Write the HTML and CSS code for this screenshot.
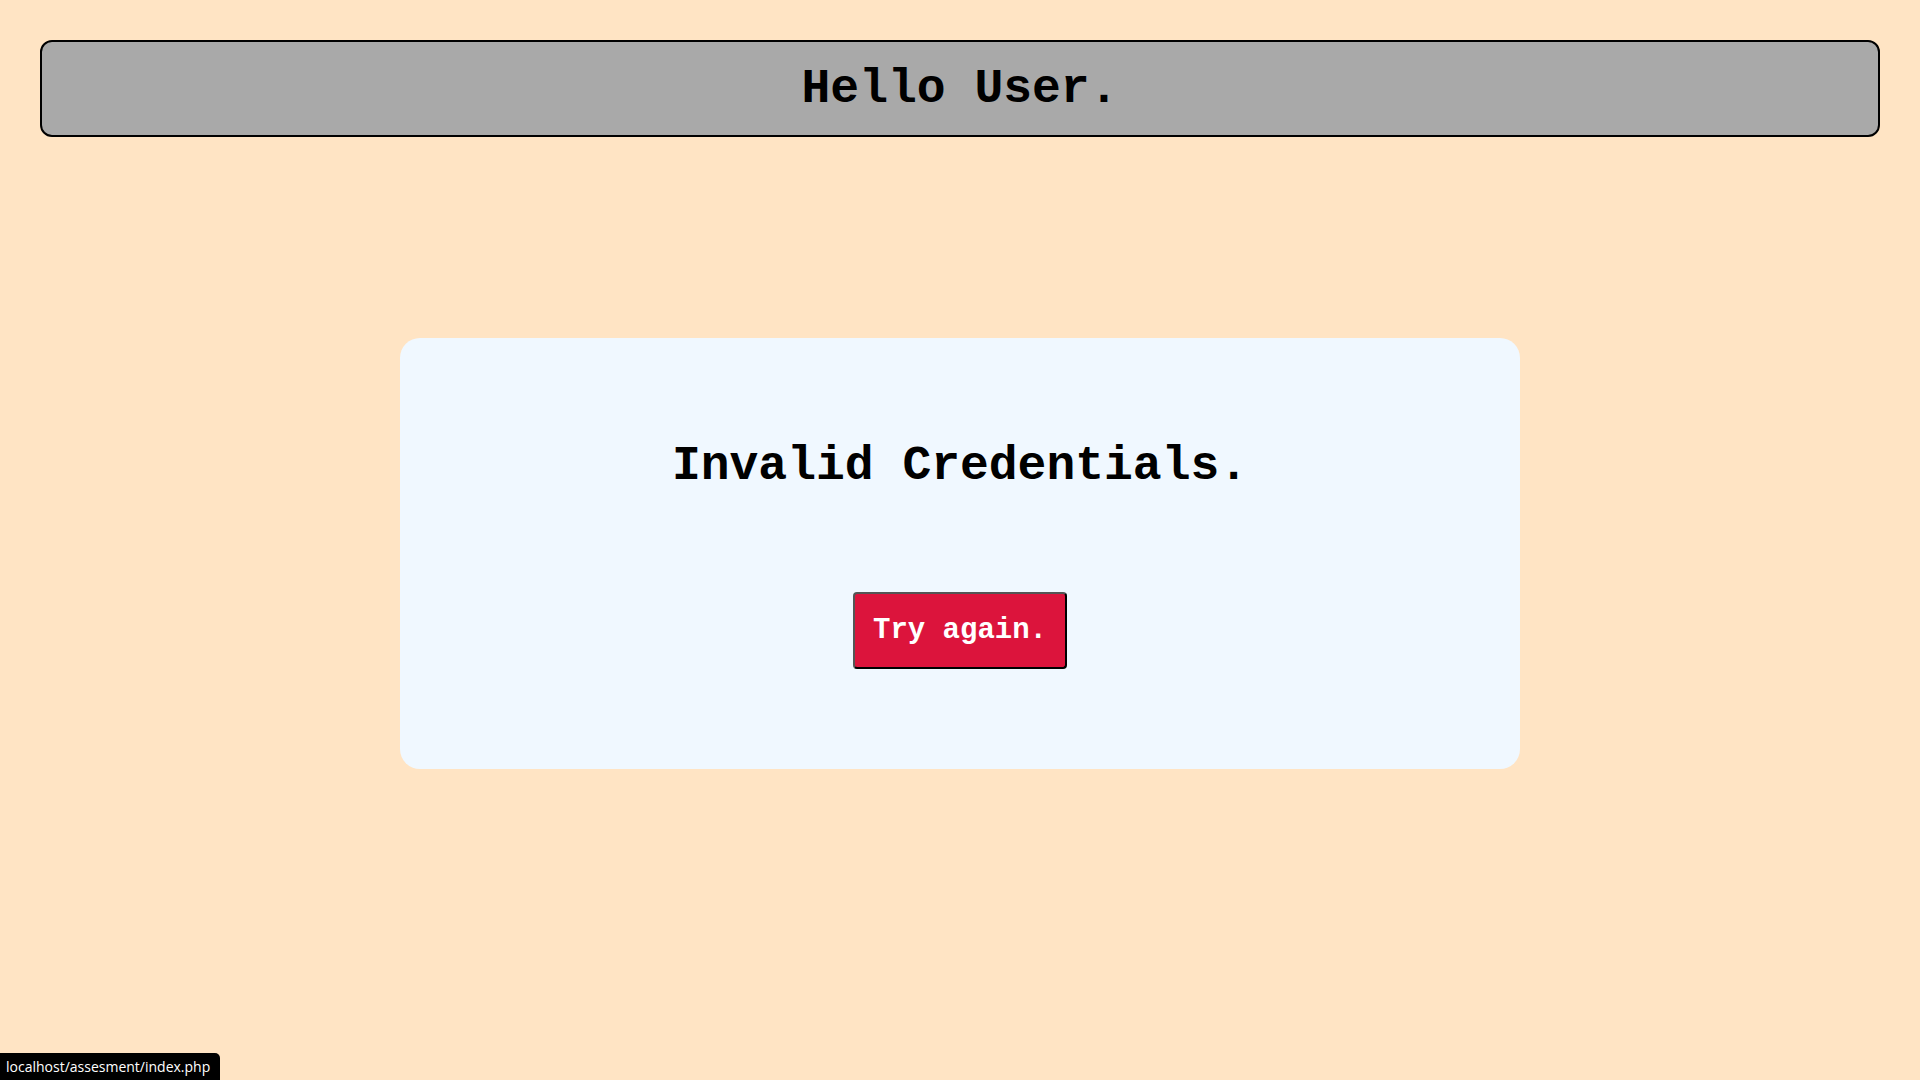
FILE: index.html
```html
<!DOCTYPE html>
<html lang="en">
<head>
<meta charset="utf-8">
<title>Invalid Credentials</title>
<link rel="stylesheet" href="styles.css">
</head>
<body>
<div class="page">
  <header class="topbar">
    <h1 class="greeting">Hello User.</h1>
  </header>
  <main class="content">
    <section class="card">
      <h2 class="message">Invalid Credentials.</h2>
      <a class="retry" href="#">Try again.</a>
    </section>
  </main>
</div>
<div class="status">localhost/assesment/index.php</div>
</body>
</html>
```
FILE: styles.css
```css
html, body {
  margin: 0;
  padding: 0;
}
body {
  background: #ffe4c4;
  font-family: "Courier New", "Liberation Mono", monospace;
  color: #000;
  min-height: 1080px;
}
.page {
  padding: 40px;
  display: flex;
  flex-direction: column;
}
.topbar {
  background: #a9a9a9;
  border: 2px solid #000;
  border-radius: 12px;
  padding: 20px 0 19px;
  text-align: center;
}
.greeting {
  margin: 0;
  font-size: 48px;
  line-height: 54px;
  font-weight: bold;
}
.content {
  display: flex;
  justify-content: center;
  padding-top: 201px;
}
.card {
  width: 1120px;
  box-sizing: border-box;
  background: #f0f8ff;
  border-radius: 20px;
  padding: 101px 0 100px;
  display: flex;
  flex-direction: column;
  align-items: center;
}
.message {
  margin: 0 0 99px;
  font-size: 48px;
  line-height: 54px;
  font-weight: bold;
}
.retry {
  display: block;
  background: #dc143c;
  color: #fff;
  text-decoration: none;
  font-size: 29px;
  line-height: 33px;
  font-weight: bold;
  padding: 20px 18px;
  border: 2px solid;
  border-color: #555 #000 #000 #555;
  border-radius: 4px;
}
.status {
  position: fixed;
  left: 0;
  bottom: 0;
  width: 220px;
  height: 27px;
  box-sizing: border-box;
  background: #000;
  color: #fff;
  font-family: "Open Sans", "Noto Sans", sans-serif;
  font-size: 14px;
  line-height: 27px;
  padding-left: 6px;
  border-top-right-radius: 5px;
  white-space: nowrap;
  overflow: hidden;
}
```
